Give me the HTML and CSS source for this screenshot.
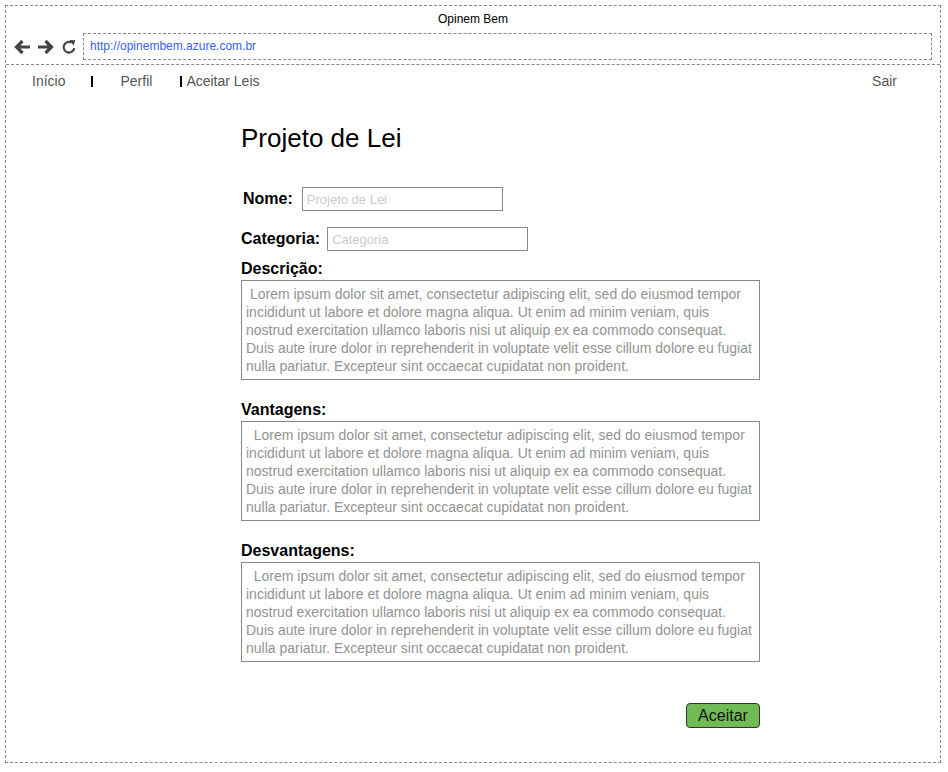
FILE: index.html
```html
<!DOCTYPE html>
<html lang="pt">
<head>
<meta charset="utf-8">
<title>Opinem Bem</title>
<link rel="stylesheet" href="styles.css">
</head>
<body>
<div class="window">
  <div class="titlebar">Opinem Bem</div>
  <div class="toolbar">
    <div class="icons">
      <svg class="ico" width="18" height="18" viewBox="0 0 18 18"><path d="M17 9H4M9.5 3L3.5 9l6 6" fill="none" stroke="#444" stroke-width="3.2"/></svg>
      <svg class="ico" width="18" height="18" viewBox="0 0 18 18"><path d="M1 9h13M8.5 3l6 6-6 6" fill="none" stroke="#444" stroke-width="3.2"/></svg>
      <svg class="ico" width="16" height="16" viewBox="0 0 16 16"><path d="M13.2 9A5.3 5.3 0 1 1 10.5 3.6" fill="none" stroke="#444" stroke-width="2.2"/><path d="M8.5 1l6 0.3-2 5.2z" fill="#444"/></svg>
    </div>
    <div class="address">http://opinembem.azure.com.br</div>
  </div>
  <nav class="nav">
    <a class="nav-item first">Início</a>
    <span class="sep"></span>
    <a class="nav-item">Perfil</a>
    <span class="sep sep2"></span>
    <a class="nav-item tight">Aceitar Leis</a>
    <a class="nav-item right">Sair</a>
  </nav>
  <main class="content">
    <h1 class="title">Projeto de Lei</h1>
    <div class="field field-nome">
      <label class="label">Nome:</label>
      <input class="input" type="text" placeholder="Projeto de Lei">
    </div>
    <div class="field field-cat">
      <label class="label">Categoria:</label>
      <input class="input" type="text" placeholder="Categoria">
    </div>
    <div class="block">
      <div class="label">Descrição:</div>
      <div class="area"> Lorem ipsum dolor sit amet, consectetur adipiscing elit, sed do eiusmod tempor incididunt ut labore et dolore magna aliqua. Ut enim ad minim veniam, quis nostrud exercitation ullamco laboris nisi ut aliquip ex ea commodo consequat. Duis aute irure dolor in reprehenderit in voluptate velit esse cillum dolore eu fugiat nulla pariatur. Excepteur sint occaecat cupidatat non proident.</div>
    </div>
    <div class="block">
      <div class="label">Vantagens:</div>
      <div class="area">  Lorem ipsum dolor sit amet, consectetur adipiscing elit, sed do eiusmod tempor incididunt ut labore et dolore magna aliqua. Ut enim ad minim veniam, quis nostrud exercitation ullamco laboris nisi ut aliquip ex ea commodo consequat. Duis aute irure dolor in reprehenderit in voluptate velit esse cillum dolore eu fugiat nulla pariatur. Excepteur sint occaecat cupidatat non proident.</div>
    </div>
    <div class="block">
      <div class="label">Desvantagens:</div>
      <div class="area">  Lorem ipsum dolor sit amet, consectetur adipiscing elit, sed do eiusmod tempor incididunt ut labore et dolore magna aliqua. Ut enim ad minim veniam, quis nostrud exercitation ullamco laboris nisi ut aliquip ex ea commodo consequat. Duis aute irure dolor in reprehenderit in voluptate velit esse cillum dolore eu fugiat nulla pariatur. Excepteur sint occaecat cupidatat non proident.</div>
    </div>
    <div class="actions">
      <button class="btn">Aceitar</button>
    </div>
  </main>
</div>
</body>
</html>
```
FILE: styles.css
```css
* { box-sizing: border-box; }
html, body { margin: 0; padding: 0; background: #fff; }
body { font-family: "Liberation Sans", Arial, sans-serif; color: #000; }

.window {
  margin: 5px 0 0 5px;
  width: 936px;
  height: 758px;
  border: 1px dashed #888;
}

.titlebar {
  height: 27px;
  font-size: 12px;
  line-height: 24px;
  text-align: center;
  padding-top: 1px;
}

.toolbar {
  display: flex;
  align-items: center;
  height: 32px;
  padding-bottom: 4px;
  border-bottom: 1px dashed #888;
}

.icons {
  display: flex;
  align-items: center;
  gap: 6px;
  padding-left: 7px;
  width: 77px;
}

.address {
  width: 849px;
  height: 27px;
  border: 1px dashed #888;
  font-size: 12px;
  line-height: 25px;
  padding-left: 6px;
  color: #3a5fe8;
}

.nav {
  display: flex;
  align-items: center;
  height: 31px;
  padding-top: 1px;
  font-size: 14px;
  color: #555;
}
.nav-item { display: block; }
.nav-item.first { margin-left: 26px; }
.sep {
  width: 2px;
  height: 11px;
  background: #000;
  margin-left: 26px;
  margin-right: 27px;
}
.sep2 { margin-left: 28px; margin-right: 4px; }
.nav-item.right { margin-left: auto; margin-right: 43px; }

.content {
  margin-left: 235px;
  width: 519px;
}

.title {
  font-weight: normal;
  font-size: 26px;
  margin: 27px 0 0 0;
  line-height: 30px;
}

.field {
  display: flex;
  align-items: center;
}
.field-nome { margin-top: 34px; padding-left: 2px; gap: 9px; }
.field-cat { margin-top: 16px; gap: 7px; }

.label {
  font-weight: bold;
  font-size: 16px;
  line-height: 18px;
}

.input {
  width: 201px;
  height: 24px;
  border: 1px solid #888;
  font-family: "Liberation Sans", Arial, sans-serif;
  font-size: 13px;
  padding: 0 4px;
  margin: 0;
  outline: none;
}
.input::placeholder { color: #ccc; }

.block { margin-top: 9px; }
.block + .block { margin-top: 21px; }

.area {
  margin-top: 2px;
  height: 100px;
  border: 1px solid #888;
  padding: 4px 6px 0 4px;
  font-size: 14px;
  line-height: 18px;
  color: #939393;
  white-space: pre-wrap;
}

.actions {
  display: flex;
  justify-content: flex-end;
  margin-top: 41px;
}
.btn {
  width: 74px;
  height: 25px;
  background: #70bb53;
  border: 1px solid #333;
  border-radius: 4px;
  font-family: "Liberation Sans", Arial, sans-serif;
  font-size: 16px;
  color: #111;
  padding: 0;
  line-height: 22px;
}
```
